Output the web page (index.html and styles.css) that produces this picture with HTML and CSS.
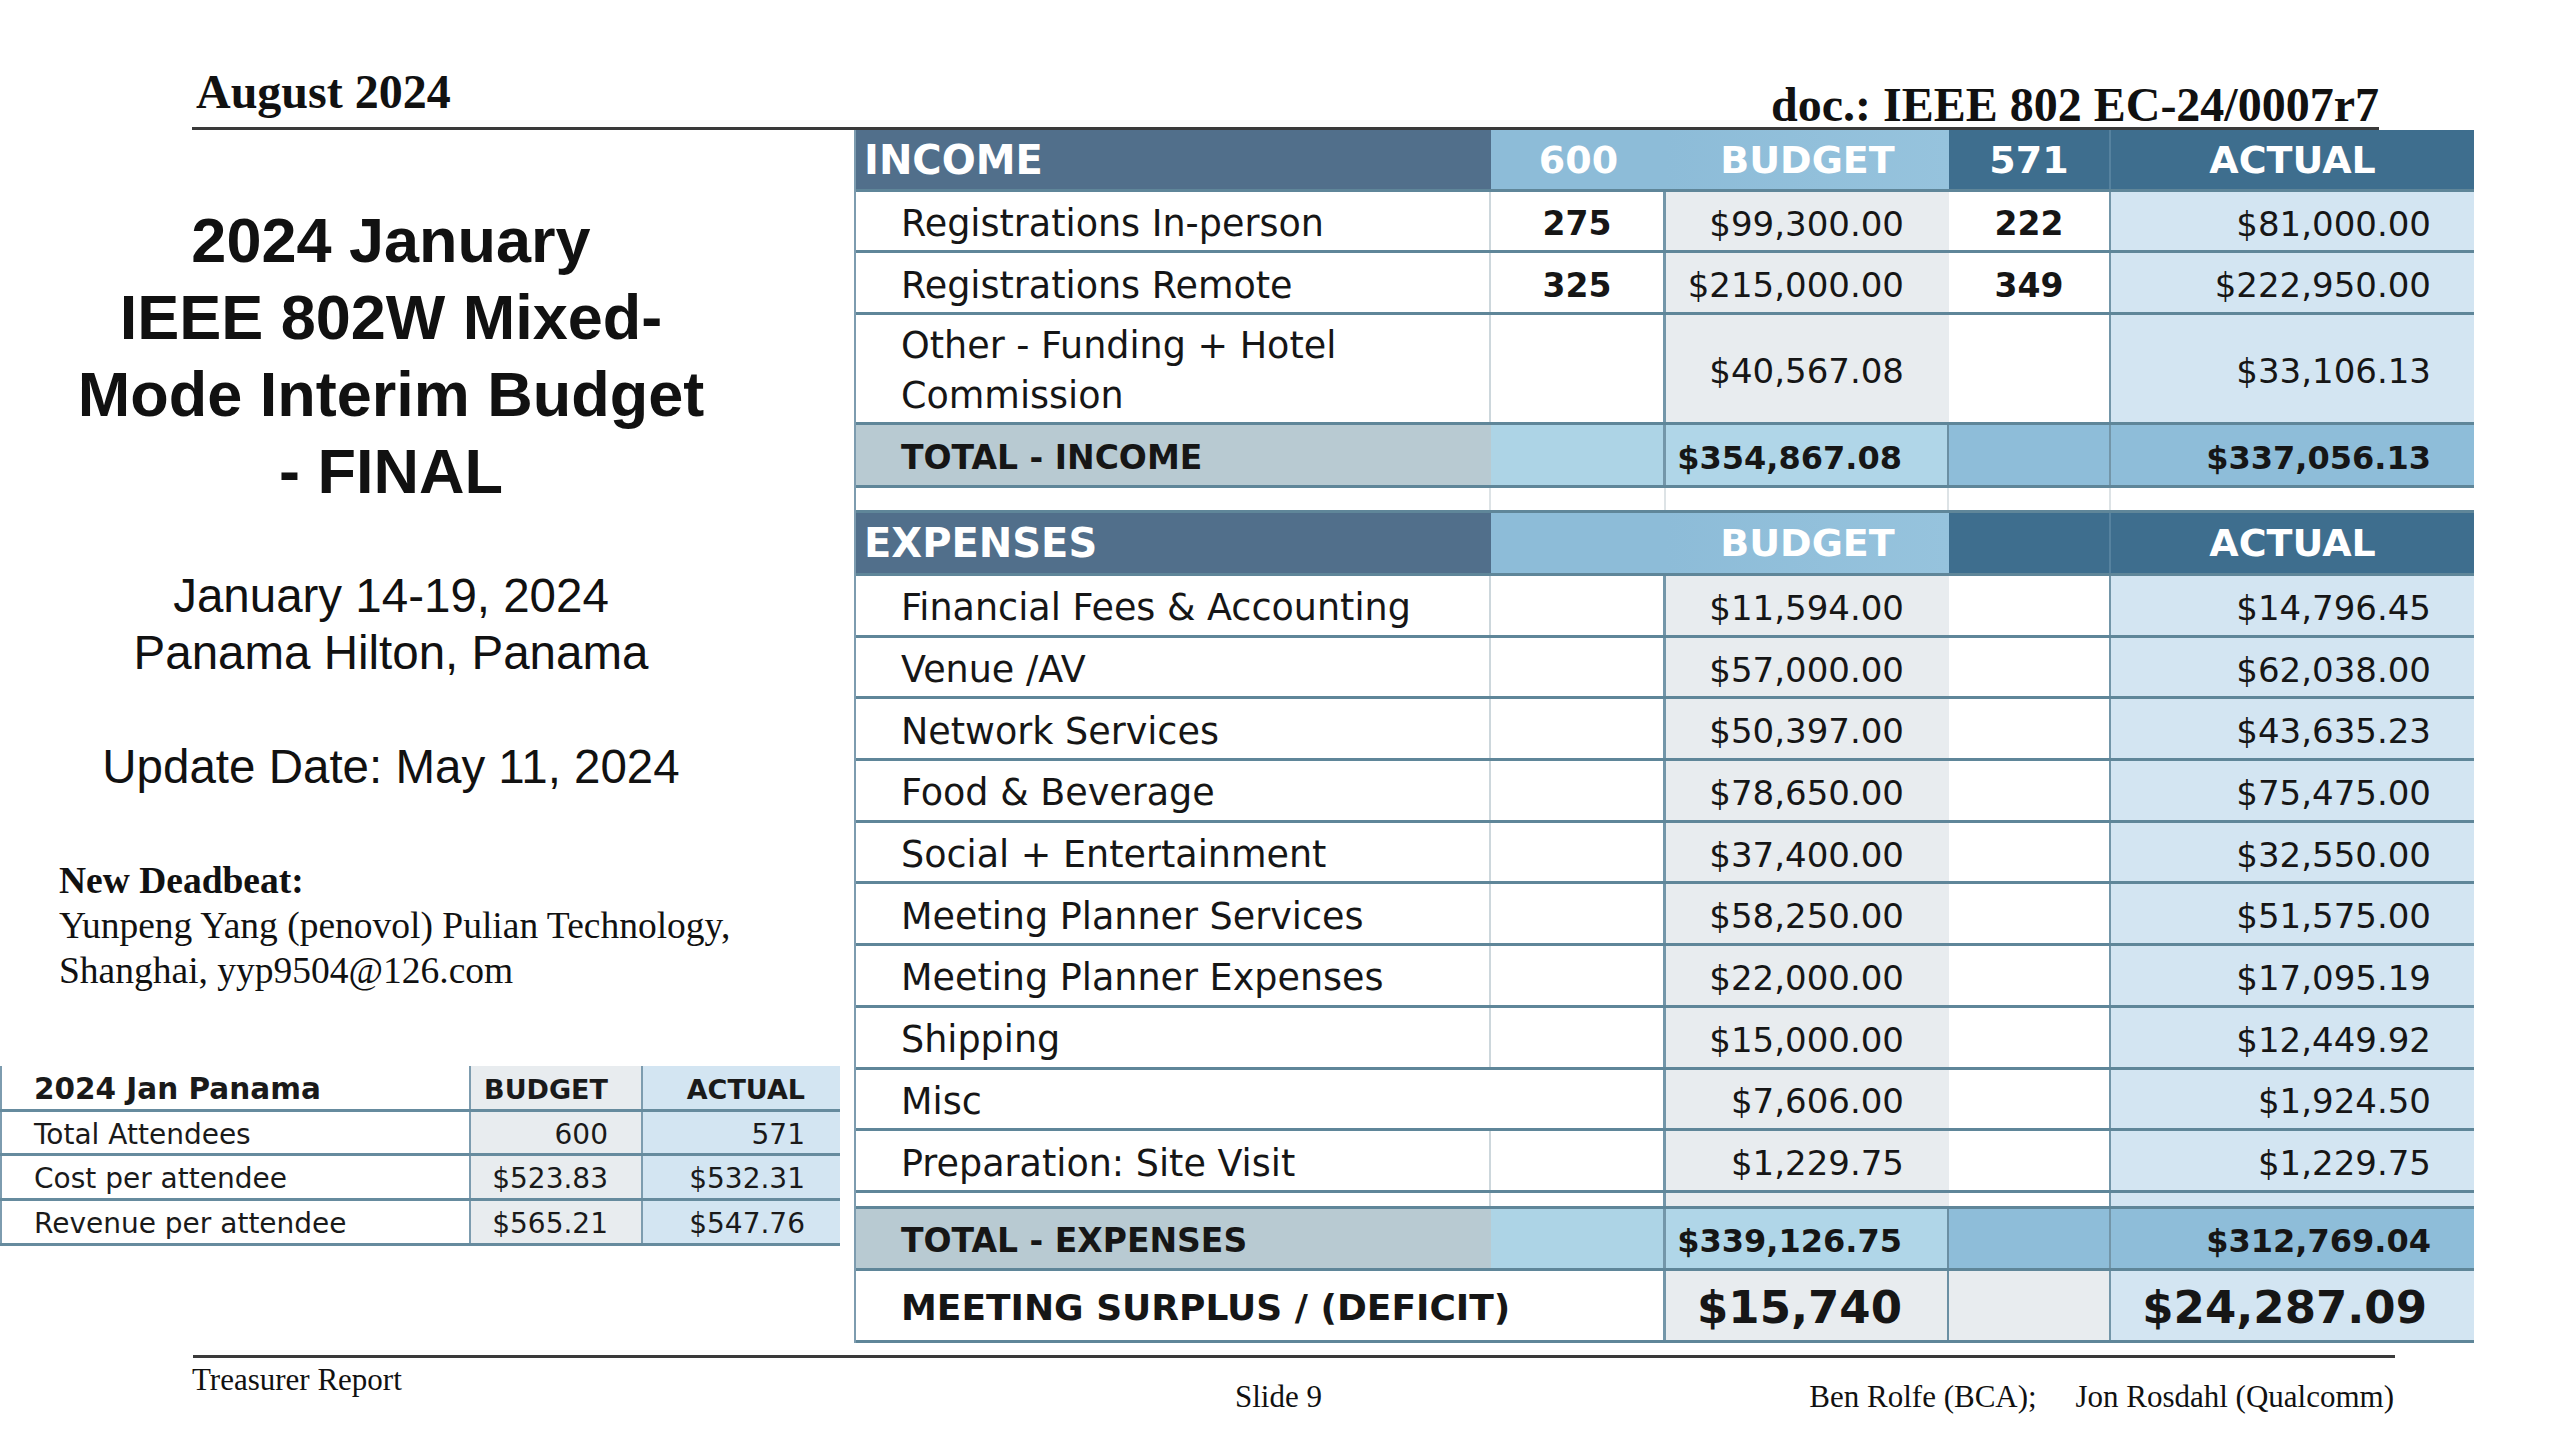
FILE: index.html
```html
<!DOCTYPE html>
<html lang="en">
<head>
<meta charset="utf-8">
<title>2024 January IEEE 802W Mixed-Mode Interim Budget - FINAL</title>
<link rel="stylesheet" href="styles.css">
</head>
<body>
<div class="slide">
  <header class="top">
    <div class="top-left">August 2024</div>
    <div class="top-right">doc.: IEEE 802 EC-24/0007r7</div>
  </header>
  <div class="rule rule-top"></div>

  <main class="main">
    <section class="left">
      <h1 class="title">2024 January<br>IEEE 802W Mixed-<br>Mode Interim Budget<br>- FINAL</h1>
      <div class="venue">January 14-19, 2024<br>Panama Hilton, Panama<br><br>Update Date: May 11, 2024</div>
      <div class="deadbeat"><b class="dead-title">New Deadbeat:</b><br>Yunpeng Yang (penovol) Pulian Technology,<br>Shanghai, yyp9504@126.com</div>

      <div class="mini">
        <div class="mrow mhead h46"><div class="mc ml">2024 Jan Panama</div><div class="mc mb">BUDGET</div><div class="mc ma">ACTUAL</div></div>
        <div class="mrow h44"><div class="mc ml">Total Attendees</div><div class="mc mb">600</div><div class="mc ma">571</div></div>
        <div class="mrow h45"><div class="mc ml">Cost per attendee</div><div class="mc mb">$523.83</div><div class="mc ma">$532.31</div></div>
        <div class="mrow h45"><div class="mc ml">Revenue per attendee</div><div class="mc mb">$565.21</div><div class="mc ma">$547.76</div></div>
      </div>
    </section>

    <section class="budget">
      <div class="row hd r62"><div class="c lab">INCOME</div><div class="c n6">600</div><div class="c bud">BUDGET</div><div class="c n5">571</div><div class="c act">ACTUAL</div></div>
      <div class="row dt r61"><div class="c lab">Registrations In-person</div><div class="c n6 bold">275</div><div class="c bud">$99,300.00</div><div class="c n5 bold">222</div><div class="c act">$81,000.00</div></div>
      <div class="row dt r62"><div class="c lab">Registrations Remote</div><div class="c n6 bold">325</div><div class="c bud">$215,000.00</div><div class="c n5 bold">349</div><div class="c act">$222,950.00</div></div>
      <div class="row dt r110"><div class="c lab two">Other - Funding + Hotel<br>Commission</div><div class="c n6"></div><div class="c bud">$40,567.08</div><div class="c n5"></div><div class="c act">$33,106.13</div></div>
      <div class="row tot r63"><div class="c lab">TOTAL - INCOME</div><div class="c n6"></div><div class="c bud">$354,867.08</div><div class="c n5"></div><div class="c act">$337,056.13</div></div>
      <div class="row gap r25"><div class="c lab"></div><div class="c n6"></div><div class="c bud"></div><div class="c n5"></div><div class="c act"></div></div>

      <div class="row hd r63"><div class="c lab">EXPENSES</div><div class="c n6"></div><div class="c bud">BUDGET</div><div class="c n5"></div><div class="c act">ACTUAL</div></div>
      <div class="row dt rx"><div class="c lab">Financial Fees &amp; Accounting</div><div class="c n6"></div><div class="c bud">$11,594.00</div><div class="c n5"></div><div class="c act">$14,796.45</div></div>
      <div class="row dt rx"><div class="c lab">Venue /AV</div><div class="c n6"></div><div class="c bud">$57,000.00</div><div class="c n5"></div><div class="c act">$62,038.00</div></div>
      <div class="row dt rx"><div class="c lab">Network Services</div><div class="c n6"></div><div class="c bud">$50,397.00</div><div class="c n5"></div><div class="c act">$43,635.23</div></div>
      <div class="row dt rx"><div class="c lab">Food &amp; Beverage</div><div class="c n6"></div><div class="c bud">$78,650.00</div><div class="c n5"></div><div class="c act">$75,475.00</div></div>
      <div class="row dt rx"><div class="c lab">Social + Entertainment</div><div class="c n6"></div><div class="c bud">$37,400.00</div><div class="c n5"></div><div class="c act">$32,550.00</div></div>
      <div class="row dt rx"><div class="c lab">Meeting Planner Services</div><div class="c n6"></div><div class="c bud">$58,250.00</div><div class="c n5"></div><div class="c act">$51,575.00</div></div>
      <div class="row dt rx"><div class="c lab">Meeting Planner Expenses</div><div class="c n6"></div><div class="c bud">$22,000.00</div><div class="c n5"></div><div class="c act">$17,095.19</div></div>
      <div class="row dt rx"><div class="c lab">Shipping</div><div class="c n6"></div><div class="c bud">$15,000.00</div><div class="c n5"></div><div class="c act">$12,449.92</div></div>
      <div class="row dt rx"><div class="c lab lab-wide">Misc</div><div class="c bud">$7,606.00</div><div class="c n5"></div><div class="c act">$1,924.50</div></div>
      <div class="row dt rx"><div class="c lab">Preparation: Site Visit</div><div class="c n6"></div><div class="c bud">$1,229.75</div><div class="c n5"></div><div class="c act">$1,229.75</div></div>
      <div class="row dt r16"><div class="c lab"></div><div class="c n6"></div><div class="c bud"></div><div class="c n5"></div><div class="c act"></div></div>
      <div class="row tot r62"><div class="c lab">TOTAL - EXPENSES</div><div class="c n6"></div><div class="c bud">$339,126.75</div><div class="c n5"></div><div class="c act">$312,769.04</div></div>
      <div class="row sur r72"><div class="c lab lab-wide">MEETING SURPLUS / (DEFICIT)</div><div class="c bud">$15,740</div><div class="c n5"></div><div class="c act">$24,287.09</div></div>
    </section>
  </main>

  <div class="rule rule-bottom"></div>
  <footer class="foot">
    <div class="f-left">Treasurer Report</div>
    <div class="f-mid">Slide 9</div>
    <div class="f-right">Ben Rolfe (BCA);&nbsp;&nbsp;&nbsp;&nbsp; Jon Rosdahl (Qualcomm)</div>
  </footer>
</div>
</body>
</html>
```

FILE: styles.css
```css
* { box-sizing: border-box; margin: 0; padding: 0; }

body {
  margin: 0;
  background: #ffffff;
}

.slide {
  width: 2560px;
  height: 1440px;
  overflow: hidden;
  background: #ffffff;
  color: #111111;
  font-family: "Liberation Serif", "Times New Roman", serif;
  display: flex;
  flex-direction: column;
}

/* ---------- header ---------- */
.top {
  height: 127px;
  flex: none;
  display: flex;
  justify-content: space-between;
  align-items: flex-start;
  padding: 0 181px 0 196px;
}
.top-left,
.top-right {
  font-family: "Liberation Serif", "Times New Roman", serif;
  font-weight: bold;
  font-size: 48px;
  line-height: 48px;
  white-space: nowrap;
}
.top-left { margin-top: 68px; }
.top-right { margin-top: 81px; }

.rule {
  height: 3px;
  flex: none;
  background: #3a3a3a;
}
.rule-top { margin-left: 192px; width: 2187px; }
.rule-bottom { margin-left: 193px; width: 2202px; }

/* ---------- main ---------- */
.main {
  height: 1225px;
  flex: none;
  display: flex;
}

.left {
  width: 854px;
  flex: none;
  display: flex;
  flex-direction: column;
}

.title {
  margin-top: 72px;
  width: 782px;
  text-align: center;
  font-family: "Liberation Sans", Arial, sans-serif;
  font-weight: bold;
  font-size: 63px;
  line-height: 77px;
  white-space: nowrap;
}

.venue {
  margin-top: 57px;
  width: 782px;
  text-align: center;
  font-family: "Liberation Sans", Arial, sans-serif;
  font-size: 47.5px;
  line-height: 57px;
  white-space: nowrap;
}

.deadbeat {
  margin-top: 63px;
  padding-left: 59px;
  font-family: "Liberation Serif", "Times New Roman", serif;
  font-size: 37.5px;
  line-height: 45px;
  white-space: nowrap;
}
.dead-title { font-weight: bold; }

/* ---------- small summary table ---------- */
.mini {
  margin-top: 73px;
  width: 840px;
  font-family: "DejaVu Sans", sans-serif;
  font-size: 28px;
  color: #1a1a1a;
}
.mrow {
  display: grid;
  grid-template-columns: 469px 172px 199px;
  border-bottom: 3px solid #668b9e;
}
.h46 { height: 46px; }
.h44 { height: 44px; }
.h45 { height: 45px; }
.mc {
  display: flex;
  align-items: center;
  white-space: nowrap;
  padding-top: 3px;
}
.ml {
  padding-left: 32px;
  background: #ffffff;
  border-left: 2px solid #7d9caf;
}
.mb {
  justify-content: flex-end;
  padding-right: 33px;
  background: #e8ecef;
  border-left: 2px solid #7d9caf;
}
.ma {
  justify-content: flex-end;
  padding-right: 35px;
  background: #d3e5f2;
  border-left: 2px solid #7d9caf;
}
.mhead { font-weight: bold; font-size: 27px; }
.mhead .ml { font-size: 29.5px; }

/* ---------- budget table ---------- */
.budget {
  width: 1620px;
  flex: none;
  align-self: flex-start;
  border-left: 2px solid #7d9caf;
  font-family: "DejaVu Sans", sans-serif;
  font-size: 34px;
  color: #161616;
}

.row {
  display: grid;
  grid-template-columns: 635px 175px 283px 162px 363px;
  border-bottom: 3px solid #5f8699;
}
.r16 { height: 16px; }
.r25 { height: 25px; }
.r61 { height: 61px; }
.r62 { height: 62px; }
.r63 { height: 63px; }
.r72 { height: 72px; }
.r110 { height: 110px; }
.rx { height: 61.7px; }

.c {
  display: flex;
  align-items: center;
  white-space: nowrap;
  min-width: 0;
}
.dt .c, .tot .c, .sur .c { padding-top: 5px; }
.lab {
  padding-left: 45px;
  font-size: 36.5px;
  border-right: 2px solid #cdd7dc;
}
.lab-wide { grid-column: 1 / span 2; border-right: 3px solid #7396a9; }
.two { line-height: 50px; }
.n6 {
  justify-content: center;
  border-right: 3px solid #7396a9;
}
.bud {
  justify-content: flex-end;
  padding-right: 45px;
}
.n5 {
  justify-content: center;
  border-right: 2px solid #7396a9;
}
.act {
  justify-content: flex-end;
  padding-right: 43px;
}
.bold { font-weight: bold; font-size: 33px; }

/* data rows */
.dt .lab, .dt .n6, .dt .n5 { background: #ffffff; }
.dt .bud { background: #e8ecef; }
.dt .act { background: #d3e5f2; }

/* header rows */
.hd {
  color: #ffffff;
  font-weight: bold;
  font-size: 38px;
}
.hd .lab {
  font-size: 40px;
  padding-left: 8px;
  background: #516f8b;
  border-right: none;
}
.hd .n6 { background: #8dbcd8; border-right: none; }
.hd .bud {
  background: linear-gradient(90deg, #8dbcd8, #96c3dd);
  justify-content: center;
  padding-right: 0;
}
.hd .n5 { background: #3e6e8e; border-right: 2px solid #56829f; }
.hd .act {
  background: #3e6e8e;
  justify-content: center;
  padding-right: 0;
}

/* total rows */
.tot { font-weight: bold; font-size: 32px; }
.tot .lab { font-size: 33px; background: #b8cad2; border-right: none; }
.tot .n6 { background: #add4e6; border-right: 3px solid #7396a9; }
.tot .bud { background: #b0d6e8; border-right: 2px solid #6a8fa3; }
.tot .n5 { background: #8ebdd9; }
.tot .act { background: #8ebdd9; }

/* blank gap row */
.gap .lab, .gap .n6, .gap .bud, .gap .n5, .gap .act { background: #ffffff; }
.gap .lab { border-right: 2px solid #dde3e6; }
.gap .n6 { border-right: 2px solid #dde3e6; }
.gap .bud { border-right: 2px solid #dde3e6; }
.gap .n5 { border-right: 2px solid #dde3e6; }

/* surplus row */
.sur { font-weight: bold; }
.sur .lab { font-size: 36px; background: #ffffff; }
.sur .bud { background: #e8ecef; font-size: 45px; border-right: 2px solid #6a8fa3; }
.sur .n5 { background: #e8ecef; }
.sur .act { background: #d3e5f2; font-size: 45px; padding-right: 47px; }

/* ---------- footer ---------- */
.foot {
  flex: none;
  height: 82px;
  display: flex;
  align-items: flex-start;
  padding: 0 166px 0 192px;
  font-family: "Liberation Serif", "Times New Roman", serif;
  font-size: 31px;
  line-height: 31px;
  white-space: nowrap;
}
.f-left { width: 1043px; margin-top: 6px; }
.f-mid { margin-top: 23px; }
.f-right { margin-left: auto; margin-top: 23px; }
```
